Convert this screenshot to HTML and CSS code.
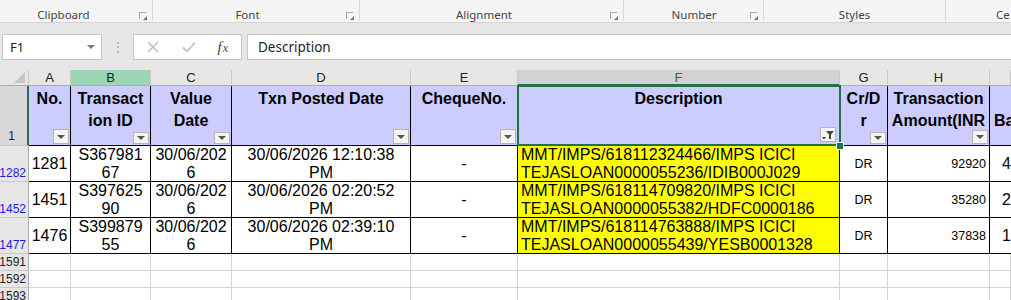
FILE: index.html
```html
<!DOCTYPE html>
<html lang="en">
<head>
    <meta charset="UTF-8">
    <meta name="viewport" content="width=device-width, initial-scale=1.0">
    <title>Statement - Excel</title>
    <link rel="stylesheet" href="styles.css">
</head>
<body>
    <div class="ribbon">
        <div class="group g-clip"><span class="group-label">Clipboard</span><span class="launcher"></span></div>
        <div class="group g-font"><span class="group-label">Font</span><span class="launcher"></span></div>
        <div class="group g-align"><span class="group-label">Alignment</span><span class="launcher"></span></div>
        <div class="group g-num"><span class="group-label">Number</span><span class="launcher"></span></div>
        <div class="group g-styles"><span class="group-label">Styles</span></div>
        <div class="group g-cells"><span class="group-label">Ce</span></div>
    </div>

    <div class="formula-bar">
        <div class="name-box">
            <span>F1</span>
            <span class="name-arrow"></span>
        </div>
        <div class="grip">&#8942;</div>
        <div class="fx-box">
            <svg width="14" height="14" viewBox="0 0 14 14"><path d="M2 2 L12 12 M12 2 L2 12" stroke="#c2c2c2" stroke-width="1.6" fill="none"/></svg>
            <svg width="16" height="14" viewBox="0 0 16 14"><path d="M2 7.5 L6 11.5 L14 2.5" stroke="#c2c2c2" stroke-width="1.8" fill="none"/></svg>
            <span class="fx"><i>f</i><i class="x">x</i></span>
        </div>
        <div class="formula-input">Description</div>
    </div>

    <div class="sheet">
        <!-- column letters -->
        <div class="corner"><svg width="11" height="11" viewBox="0 0 11 11"><polygon points="11,0 11,11 0,11" fill="#c6c6c6"/></svg></div>
        <div class="col-head">A</div>
        <div class="col-head marked">B</div>
        <div class="col-head">C</div>
        <div class="col-head">D</div>
        <div class="col-head">E</div>
        <div class="col-head active">F</div>
        <div class="col-head">G</div>
        <div class="col-head">H</div>
        <div class="col-head"></div>

        <!-- header row -->
        <div class="row-head active">1</div>
        <div class="hdr"><span>No.</span><span class="filter-btn"></span></div>
        <div class="hdr"><span>Transact<br>ion ID</span><span class="filter-btn"></span></div>
        <div class="hdr"><span>Value<br>Date</span><span class="filter-btn"></span></div>
        <div class="hdr"><span>Txn Posted Date</span><span class="filter-btn"></span></div>
        <div class="hdr"><span>ChequeNo.</span><span class="filter-btn"></span></div>
        <div class="hdr selected">
            <span>Description</span>
            <span class="filter-btn on">
                <svg width="14" height="13" viewBox="0 0 14 13"><polygon points="1,9 5,9 3,11.5" fill="#444"/><polygon points="5,3 13,3 10,6.5 10,11 8,11 8,6.5" fill="#444"/></svg>
            </span>
        </div>
        <div class="hdr"><span>Cr/D<br>r</span><span class="filter-btn"></span></div>
        <div class="hdr"><span class="clip">Transaction<br>Amount(INR</span><span class="filter-btn"></span></div>
        <div class="hdr last"><span class="ba">Ba</span></div>

        <!-- data rows -->
        <div class="row-head filtered">1282</div>
        <div class="cell">1281</div>
        <div class="cell">S367981<br>67</div>
        <div class="cell">30/06/202<br>6</div>
        <div class="cell">30/06/2026 12:10:38<br>PM</div>
        <div class="cell">-</div>
        <div class="cell desc">MMT/IMPS/618112324466/IMPS ICICI<br>TEJASLOAN0000055236/IDIB000J029</div>
        <div class="cell small">DR</div>
        <div class="cell small num"><span>92920</span></div>
        <div class="cell tail">4</div>

        <div class="row-head filtered">1452</div>
        <div class="cell">1451</div>
        <div class="cell">S397625<br>90</div>
        <div class="cell">30/06/202<br>6</div>
        <div class="cell">30/06/2026 02:20:52<br>PM</div>
        <div class="cell">-</div>
        <div class="cell desc">MMT/IMPS/618114709820/IMPS ICICI<br>TEJASLOAN0000055382/HDFC0000186</div>
        <div class="cell small">DR</div>
        <div class="cell small num"><span>35280</span></div>
        <div class="cell tail">2</div>

        <div class="row-head filtered">1477</div>
        <div class="cell">1476</div>
        <div class="cell">S399879<br>55</div>
        <div class="cell">30/06/202<br>6</div>
        <div class="cell">30/06/2026 02:39:10<br>PM</div>
        <div class="cell">-</div>
        <div class="cell desc">MMT/IMPS/618114763888/IMPS ICICI<br>TEJASLOAN0000055439/YESB0001328</div>
        <div class="cell small">DR</div>
        <div class="cell small num"><span>37838</span></div>
        <div class="cell tail">1</div>

        <!-- empty rows -->
        <div class="row-head plain">1591</div>
        <div class="blank"></div><div class="blank"></div><div class="blank"></div><div class="blank"></div>
        <div class="blank"></div><div class="blank"></div><div class="blank"></div><div class="blank"></div><div class="blank"></div>

        <div class="row-head plain">1592</div>
        <div class="blank"></div><div class="blank"></div><div class="blank"></div><div class="blank"></div>
        <div class="blank"></div><div class="blank"></div><div class="blank"></div><div class="blank"></div><div class="blank"></div>

        <div class="row-head plain">1593</div>
        <div class="blank"></div><div class="blank"></div><div class="blank"></div><div class="blank"></div>
        <div class="blank"></div><div class="blank"></div><div class="blank"></div><div class="blank"></div><div class="blank"></div>
    </div>
</body>
</html>
```

FILE: styles.css
```css
body{
    margin: 0;
    width: 1011px;
    height: 300px;
    overflow: hidden;
    background: #ffffff;
    font-family: "Liberation Sans", Arial, sans-serif;
}

/* ribbon strip */
.ribbon{
    display: flex;
    align-items: flex-start;
    height: 23px;
    background: #f5f5f5;
    border-bottom: 1px solid #d5d5d5;
    box-sizing: border-box;
    font-family: "Noto Sans", "Open Sans", sans-serif;
    font-size: 11.5px;
    color: #444444;
}
.group{
    display: flex;
    align-items: flex-end;
    box-sizing: border-box;
    border-right: 1px solid #dadada;
    height: 21px;
}
.group-label{
    flex: 1;
    text-align: center;
    line-height: 14px;
    margin-bottom: -1px;
}
.g-clip{ width: 153px; }
.g-clip .group-label{ padding-right: 12px; }
.g-font{ width: 207px; }
.g-font .group-label{ padding-right: 4px; }
.g-align{ width: 264px; }
.g-align .group-label{ padding-right: 2px; }
.g-num{ width: 140px; }
.g-num .group-label{ padding-left: 14px; }
.g-styles{ width: 182px; }
.g-cells{ flex: 1; border-right: none; }
.g-cells .group-label{ text-align: left; padding-left: 50px; }
.launcher{
    width: 7px;
    height: 7px;
    margin: 0 6px 2px 0;
    border-top: 1px solid #a8a8a8;
    border-left: 1px solid #a8a8a8;
    box-sizing: border-box;
    position: relative;
}
.launcher::after{
    content: "";
    position: absolute;
    right: -1px;
    bottom: -1px;
    border-left: 4px solid transparent;
    border-bottom: 4px solid #777777;
}

/* formula bar */
.formula-bar{
    display: flex;
    background: #e6e6e6;
    padding: 11px 0 10px 2px;
    height: 26px;
}
.name-box{
    width: 100px;
    background: #ffffff;
    border: 1px solid #c6c6c6;
    box-sizing: border-box;
    display: flex;
    align-items: center;
    justify-content: space-between;
    padding: 0 6px 0 7px;
    font-family: "Noto Sans", sans-serif;
    font-size: 13px;
    color: #222222;
}
.name-arrow{
    border-left: 4px solid transparent;
    border-right: 4px solid transparent;
    border-top: 4px solid #777777;
}
.grip{
    width: 31px;
    text-align: center;
    color: #b0b0b0;
    font-size: 14px;
    line-height: 26px;
}
.fx-box{
    width: 109px;
    background: #ffffff;
    border: 1px solid #c6c6c6;
    box-sizing: border-box;
    display: flex;
    align-items: center;
    justify-content: space-between;
    padding: 0 13px 0 12px;
}
.fx{
    font-family: "Liberation Serif", serif;
    font-size: 15px;
    color: #444444;
}
.fx .x{
    font-size: 12px;
    margin-left: 1px;
}
.formula-input{
    flex: 1;
    margin-left: 5px;
    background: #ffffff;
    border: 1px solid #c6c6c6;
    border-right: none;
    box-sizing: border-box;
    padding-left: 10px;
    font-family: "Noto Sans", sans-serif;
    font-size: 13.5px;
    color: #222222;
    line-height: 24px;
}

/* worksheet grid */
.sheet{
    display: grid;
    grid-template-columns: 29px 42px 80px 81px 179px 107px 322px 48px 102px 1fr;
    grid-template-rows: 16px 60px 36px 36px 36px 17px 17px 17px;
}
.sheet > div{
    box-sizing: border-box;
    min-width: 0;
    overflow: hidden;
}
.corner{
    background: #e6e6e6;
    border-right: 1px solid #c8c8c8;
    border-bottom: 1px solid #ababab;
    display: flex;
    align-items: flex-end;
    justify-content: flex-end;
    padding: 0 3px 2px 0;
}
.col-head{
    background: #e6e6e6;
    border-right: 1px solid #c8c8c8;
    border-bottom: 1px solid #ababab;
    text-align: center;
    font-size: 13px;
    line-height: 16px;
    color: #222222;
}
.col-head.marked{
    background: #9fd5b7;
}
.col-head.active{
    background: #d2d2d2;
    color: #217346;
    border-bottom: 2px solid #217346;
}

.row-head{
    background: #e6e6e6;
    border-right: 1px solid #ababab;
    border-bottom: 1px solid #c8c8c8;
    display: flex;
    align-items: flex-end;
    justify-content: center;
    font-size: 12px;
    line-height: 14px;
    padding-bottom: 1px;
    color: #222222;
}
.row-head.active{
    background: #d8d8d8;
    border-right: 2px solid #217346;
    padding-bottom: 2px;
    padding-right: 4px;
}
.row-head.filtered{
    color: #1a1ae0;
    justify-content: flex-end;
    padding-right: 2px;
}
.row-head.plain{
    align-items: center;
    justify-content: flex-end;
    padding: 0 2px 0 0;
}

/* header row */
.hdr{
    background: #ccccff;
    border-right: 1px solid #000000;
    border-bottom: 1px solid #000000;
    display: flex;
    flex-direction: column;
    align-items: center;
    padding-top: 2px;
    font-weight: bold;
    font-size: 16px;
    line-height: 22px;
    color: #000000;
    text-align: center;
    white-space: nowrap;
}
.hdr.last{
    border-right: none;
    align-items: flex-start;
    padding: 24px 0 0 4px;
}
.hdr .clip{
    width: 100%;
    overflow: hidden;
}
.hdr.selected{
    position: relative;
    overflow: visible !important;
    z-index: 2;
}
.hdr.selected::after{
    content: "";
    position: absolute;
    left: -1px;
    right: -2px;
    top: -1px;
    bottom: -1px;
    border: 2px solid #217346;
}
.hdr.selected::before{
    content: "";
    position: absolute;
    right: -5px;
    bottom: -5px;
    width: 6px;
    height: 6px;
    background: #217346;
    border: 1px solid #ffffff;
    z-index: 3;
}
.filter-btn{
    margin-top: auto;
    align-self: flex-end;
    width: 16px;
    height: 15px;
    margin-right: 1px;
    margin-bottom: 1px;
    box-sizing: border-box;
    border: 1px solid #b4b4b4;
    background: #f4f4f4;
    display: flex;
    align-items: center;
    justify-content: center;
}
.filter-btn::after{
    content: "";
    border-left: 4px solid transparent;
    border-right: 4px solid transparent;
    border-top: 4px solid #555555;
}
.filter-btn.on::after{
    display: none;
}
.hdr.selected .filter-btn{
    margin-right: 3px;
    margin-bottom: 3px;
}

/* data cells */
.cell{
    background: #ffffff;
    border-right: 1px solid #000000;
    border-bottom: 1px solid #000000;
    display: flex;
    align-items: center;
    justify-content: center;
    text-align: center;
    padding-top: 1px;
    font-size: 16px;
    line-height: 18px;
    color: #000000;
    white-space: nowrap;
}
.cell.desc{
    background: #ffff00;
    justify-content: flex-start;
    text-align: left;
    padding-left: 3px;
}
.cell.small{
    font-size: 12.5px;
}
.cell.num{
    justify-content: flex-end;
    text-align: right;
    padding-right: 3px;
}
.cell.num span{
    margin-left: auto;
}
.cell.tail{
    border-right: none;
    justify-content: flex-start;
    padding-left: 12px;
}
.blank{
    background: #ffffff;
    border-right: 1px solid #d4d4d4;
    border-bottom: 1px solid #d4d4d4;
}
```
